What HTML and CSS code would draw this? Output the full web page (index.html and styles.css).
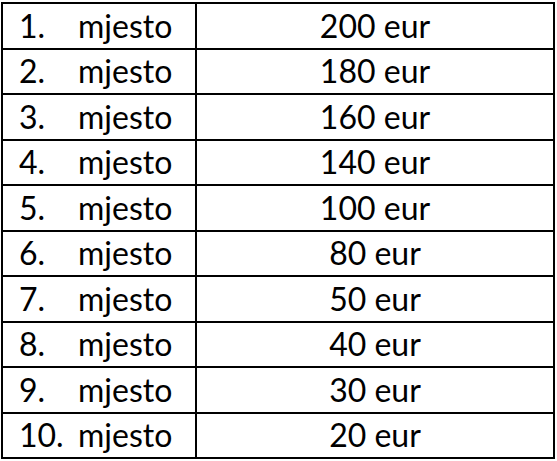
FILE: index.html
```html
<!DOCTYPE html>
<html>
<head>
<meta charset="utf-8">
<link rel="stylesheet" href="styles.css">
</head>
<body>
<table class="prizes">
  <tr><td class="place"><span class="num">1.</span>mjesto</td><td class="amount">200 eur</td></tr>
  <tr><td class="place"><span class="num">2.</span>mjesto</td><td class="amount">180 eur</td></tr>
  <tr><td class="place"><span class="num">3.</span>mjesto</td><td class="amount">160 eur</td></tr>
  <tr><td class="place"><span class="num">4.</span>mjesto</td><td class="amount">140 eur</td></tr>
  <tr><td class="place"><span class="num">5.</span>mjesto</td><td class="amount">100 eur</td></tr>
  <tr><td class="place"><span class="num">6.</span>mjesto</td><td class="amount">80 eur</td></tr>
  <tr><td class="place"><span class="num">7.</span>mjesto</td><td class="amount">50 eur</td></tr>
  <tr><td class="place"><span class="num">8.</span>mjesto</td><td class="amount">40 eur</td></tr>
  <tr><td class="place"><span class="num">9.</span>mjesto</td><td class="amount">30 eur</td></tr>
  <tr><td class="place"><span class="num">10.</span>mjesto</td><td class="amount">20 eur</td></tr>
</table>
</body>
</html>
```
FILE: styles.css
```css
html, body {
  margin: 0;
  padding: 0;
  background: #fff;
}
body {
  padding: 2px 0 0 1px;
  font-family: Lato, "Liberation Sans", sans-serif;
  color: #000;
}
.prizes {
  border-collapse: collapse;
  width: 554px;
  table-layout: fixed;
}
.prizes td {
  border: 2px solid #000;
  height: 43.5px;
  padding: 0;
  font-size: 32px;
  line-height: 1;
  white-space: nowrap;
  vertical-align: middle;
}
.prizes td.place {
  width: 176px;
  padding-left: 16px;
}
.num {
  display: inline-block;
  width: 59px;
}
.prizes td.amount {
  text-align: center;
}
```
